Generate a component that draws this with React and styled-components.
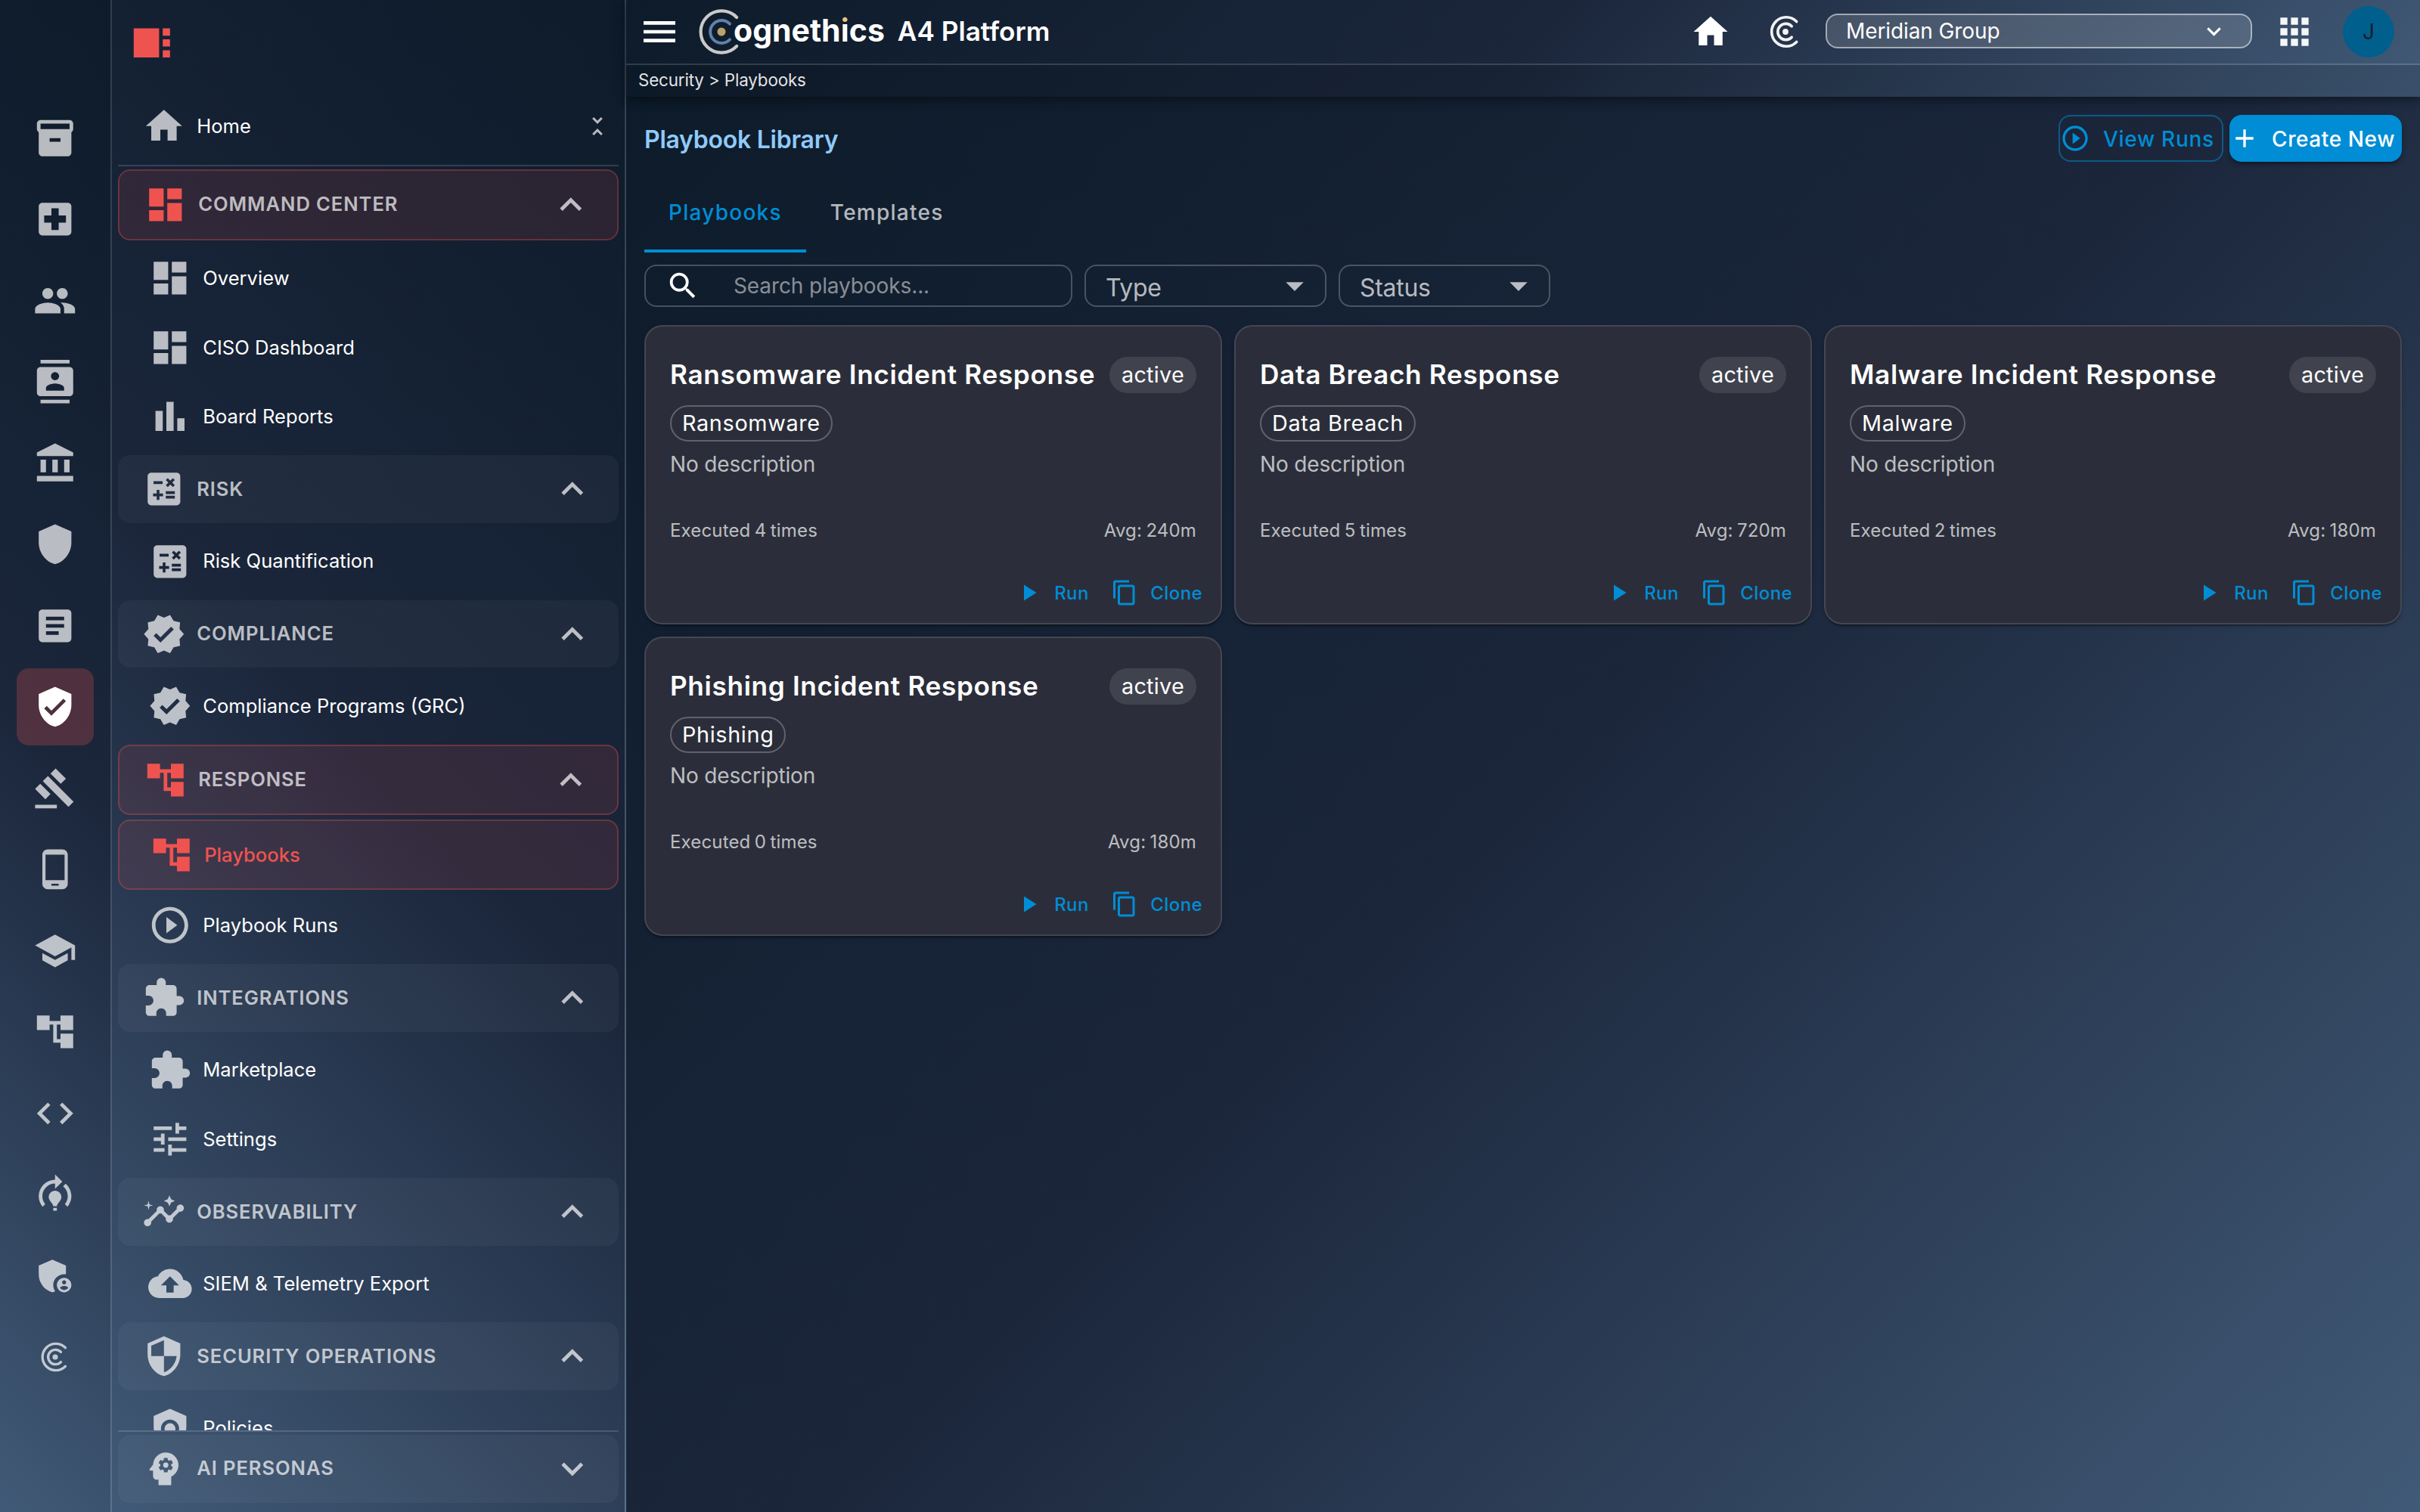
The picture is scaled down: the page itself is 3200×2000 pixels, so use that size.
import styled, { createGlobalStyle, css } from "styled-components";
import {
  MdAccountBalance,
  MdAccountTree,
  MdAdd,
  MdAdminPanelSettings,
  MdApps,
  MdArrowDropDown,
  MdArticle,
  MdCalculate,
  MdCloudUpload,
  MdCode,
  MdContacts,
  MdContentCopy,
  MdDashboard,
  MdExpandLess,
  MdExpandMore,
  MdExtension,
  MdGavel,
  MdHome,
  MdInsights,
  MdInventory2,
  MdLocalHospital,
  MdMenu,
  MdModelTraining,
  MdPeople,
  MdPhoneAndroid,
  MdPlayArrow,
  MdPlayCircleOutline,
  MdPolicy,
  MdPsychology,
  MdSchool,
  MdSearch,
  MdSecurity,
  MdShield,
  MdTune,
  MdUnfoldLess,
  MdVerified,
  MdVerifiedUser,
  MdViewSidebar,
} from "react-icons/md";

const BarsIcon = () => (
  <svg viewBox="0 0 24 24" width="1em" height="1em" fill="currentColor">
    <path d="M4 9h4v11H4zm12 4h4v7h-4zm-6-9h4v16h-4z" />
  </svg>
);

const RingsIcon = () => (
  <svg
    viewBox="0 0 48 48"
    width="1em"
    height="1em"
    fill="none"
    stroke="currentColor"
    strokeWidth="3.6"
    strokeLinecap="round"
  >
    <path d="M38.6 10.6A19.2 19.2 0 1 0 38.6 37.4" />
    <path d="M32.2 16.8A10.6 10.6 0 1 0 32.2 31.2" />
    <circle cx="24" cy="24" r="3.9" fill="currentColor" stroke="none" />
  </svg>
);

const LogoMark = () => (
  <svg viewBox="0 0 60 60" width="60" height="60" fill="none" strokeLinecap="round">
    <path d="M50.2 11A27.6 27.6 0 1 0 50.2 49" stroke="#c9c9cb" strokeWidth="4.2" />
    <path d="M41 19.6A15 15 0 1 0 41 40.4" stroke="#5f82ab" strokeWidth="4" />
    <circle cx="30" cy="30" r="5.5" fill="#b9a26c" />
  </svg>
);

const railItems = [
  { icon: MdInventory2 },
  { icon: MdLocalHospital },
  { icon: MdPeople },
  { icon: MdContacts },
  { icon: MdAccountBalance },
  { icon: MdShield },
  { icon: MdArticle },
  { icon: MdVerifiedUser, active: true },
  { icon: MdGavel },
  { icon: MdPhoneAndroid },
  { icon: MdSchool },
  { icon: MdAccountTree },
  { icon: MdCode },
  { icon: MdModelTraining },
  { icon: MdAdminPanelSettings },
  { icon: RingsIcon, small: true },
];

const groups = [
  {
    title: "COMMAND CENTER",
    icon: MdDashboard,
    active: true,
    items: [
      { label: "Overview", icon: MdDashboard },
      { label: "CISO Dashboard", icon: MdDashboard },
      { label: "Board Reports", icon: BarsIcon },
    ],
  },
  {
    title: "RISK",
    icon: MdCalculate,
    items: [{ label: "Risk Quantification", icon: MdCalculate }],
  },
  {
    title: "COMPLIANCE",
    icon: MdVerified,
    items: [{ label: "Compliance Programs (GRC)", icon: MdVerified }],
  },
  {
    title: "RESPONSE",
    icon: MdAccountTree,
    active: true,
    items: [
      { label: "Playbooks", icon: MdAccountTree, active: true },
      { label: "Playbook Runs", icon: MdPlayCircleOutline },
    ],
  },
  {
    title: "INTEGRATIONS",
    icon: MdExtension,
    items: [
      { label: "Marketplace", icon: MdExtension },
      { label: "Settings", icon: MdTune },
    ],
  },
  {
    title: "OBSERVABILITY",
    icon: MdInsights,
    items: [{ label: "SIEM & Telemetry Export", icon: MdCloudUpload }],
  },
  {
    title: "SECURITY OPERATIONS",
    icon: MdSecurity,
    items: [{ label: "Policies", icon: MdPolicy }],
  },
];

const playbooks = [
  { name: "Ransomware Incident Response", type: "Ransomware", runs: 4, avg: 240 },
  { name: "Data Breach Response", type: "Data Breach", runs: 5, avg: 720 },
  { name: "Malware Incident Response", type: "Malware", runs: 2, avg: 180 },
  { name: "Phishing Incident Response", type: "Phishing", runs: 0, avg: 180 },
];

const PlaybookCard = ({ name, type, runs, avg }) => (
  <Card>
    <CardHead>
      <CardTitle>{name}</CardTitle>
      <Chip>active</Chip>
    </CardHead>
    <Chip $outlined>{type}</Chip>
    <Description>No description</Description>
    <Stats>
      <span>Executed {runs} times</span>
      <span>Avg: {avg}m</span>
    </Stats>
    <Actions>
      <TextButton>
        <MdPlayArrow />
        Run
      </TextButton>
      <TextButton>
        <MdContentCopy />
        Clone
      </TextButton>
    </Actions>
  </Card>
);

const App = () => {
  return (
    <Layout>
      <GlobalStyle />
      <Rail>
        {railItems.map(({ icon: Icon, active, small }, i) => (
          <RailButton key={i} $active={active} $small={small}>
            <Icon />
          </RailButton>
        ))}
      </Rail>

      <Sidebar>
        <SidebarTop>
          <MdViewSidebar />
        </SidebarTop>
        <HomeRow>
          <MdHome />
          <span>Home</span>
          <Collapse>
            <MdUnfoldLess />
          </Collapse>
        </HomeRow>
        <MenuScroll>
          {groups.map((group) => (
            <Group key={group.title}>
              <GroupHeader $active={group.active}>
                <group.icon />
                <span>{group.title}</span>
                <Chevron>
                  <MdExpandLess />
                </Chevron>
              </GroupHeader>
              {group.items.map((item) => (
                <MenuItem key={item.label} $active={item.active}>
                  <item.icon />
                  <span>{item.label}</span>
                </MenuItem>
              ))}
            </Group>
          ))}
        </MenuScroll>
        <SidebarFooter>
          <GroupHeader>
            <MdPsychology />
            <span>AI PERSONAS</span>
            <Chevron>
              <MdExpandMore />
            </Chevron>
          </GroupHeader>
        </SidebarFooter>
      </Sidebar>

      <Page>
        <AppBar>
          <Toolbar>
            <MenuButton>
              <MdMenu />
            </MenuButton>
            <Brand>
              <LogoMark />
              <Wordmark>
                ogneth<GoldDot>i</GoldDot>cs
              </Wordmark>
              <Product>A4 Platform</Product>
            </Brand>
            <HomeButton>
              <MdHome />
            </HomeButton>
            <RingsButton>
              <RingsIcon />
            </RingsButton>
            <OrgSelect>
              Meridian Group
              <MdExpandMore />
            </OrgSelect>
            <AppsButton>
              <MdApps />
            </AppsButton>
            <Avatar>J</Avatar>
          </Toolbar>
          <Breadcrumbs>Security &gt; Playbooks</Breadcrumbs>
        </AppBar>

        <Content>
          <TitleRow>
            <PageTitle>Playbook Library</PageTitle>
            <OutlinedButton>
              <MdPlayCircleOutline />
              <span>View Runs</span>
            </OutlinedButton>
            <ContainedButton>
              <MdAdd />
              <span>Create New</span>
            </ContainedButton>
          </TitleRow>
          <Tabs>
            <Tab $active>Playbooks</Tab>
            <Tab>Templates</Tab>
          </Tabs>
          <Filters>
            <SearchField>
              <MdSearch />
              <span>Search playbooks...</span>
            </SearchField>
            <Select $width={320}>
              <span>Type</span>
              <MdArrowDropDown />
            </Select>
            <Select $width={280}>
              <span>Status</span>
              <MdArrowDropDown />
            </Select>
          </Filters>
          <CardGrid>
            {playbooks.map((playbook) => (
              <PlaybookCard key={playbook.name} {...playbook} />
            ))}
          </CardGrid>
        </Content>
      </Page>
    </Layout>
  );
};

export default App;

const GlobalStyle = createGlobalStyle`
  * {
    box-sizing: border-box;
  }
  body {
    margin: 0;
    background: #0d1b2a;
    color: #fff;
    font-family: Inter, "Liberation Sans", sans-serif;
    font-size: 28px;
  }
  svg {
    display: block;
    flex-shrink: 0;
  }
`;

const stops = "#0d1b2a 0%, #1b263b 50%, #415a77 100%";
const line = "rgba(255, 255, 255, 0.15)";
const muted = "rgba(255, 255, 255, 0.7)";
const primary = "#008dd5";
const red = "#ef5350";

const Layout = styled.div`
  display: flex;
  width: 3200px;
  height: 2000px;
  overflow: hidden;
`;

const Rail = styled.nav`
  width: 148px;
  padding-top: 132px;
  display: flex;
  flex-direction: column;
  align-items: center;
  gap: 5.9px;
  background: linear-gradient(225deg, ${stops});
  border-right: 2px solid ${line};
`;

const RailButton = styled.div`
  width: 101.6px;
  height: 101.6px;
  flex-shrink: 0;
  display: flex;
  align-items: center;
  justify-content: center;
  border-radius: 16px;
  font-size: ${({ $small }) => ($small ? "44px" : "57.6px")};
  color: ${({ $active }) => ($active ? "#fff" : muted)};
  background: ${({ $active }) => ($active ? "rgba(239, 83, 80, 0.25)" : "none")};
`;

const Sidebar = styled.aside`
  width: 680px;
  padding: 0 8px;
  display: flex;
  flex-direction: column;
  background: linear-gradient(225deg, ${stops});
  border-right: 2px solid ${line};
`;

const SidebarTop = styled.div`
  height: 121.8px;
  padding: 27.6px 15.6px;
  font-size: 57.6px;
  color: ${red};
`;

const row = css`
  display: flex;
  align-items: center;
  gap: 14.6px;
  font-size: 25.6px;
  border-radius: 16px;

  > svg {
    font-size: 57.6px;
    color: ${muted};
  }
`;

const HomeRow = styled.div`
  ${row}
  height: 89.6px;
  margin-bottom: 6.6px;
  padding: 0 10px 0 32px;
`;

const Collapse = styled.div`
  margin-left: auto;
  font-size: 36px;
  color: ${muted};
`;

const MenuScroll = styled.div`
  flex: 1;
  min-height: 0;
  overflow: hidden;
  padding-top: 4px;
  border-top: 2px solid ${line};
`;

const Group = styled.div`
  margin-bottom: 6.4px;
`;

const activeRow = css`
  border: 2px solid rgba(239, 83, 80, 0.3);
  background: rgba(239, 83, 80, 0.12);

  > svg {
    color: ${red};
  }
`;

const GroupHeader = styled.div`
  ${row}
  height: ${({ $active }) => ($active ? "93.6px" : "89.6px")};
  padding: 0 32px;
  margin-bottom: 5.6px;
  font-weight: 600;
  letter-spacing: 0.9px;
  color: ${muted};
  background: rgba(255, 255, 255, 0.04);
  ${({ $active }) => $active && activeRow}

  > span {
    margin-top: -2px;
  }
`;

const Chevron = styled.div`
  margin-left: auto;
  font-size: 57.6px;
  color: ${muted};
`;

const MenuItem = styled.div`
  ${row}
  height: ${({ $active }) => ($active ? "93.6px" : "89.6px")};
  padding: 0 40px;

  & + & {
    margin-top: 2px;
  }

  > span {
    margin-top: -1px;
  }

  ${({ $active }) =>
    $active &&
    css`
      ${activeRow}
      color: ${red};
      font-weight: 500;
    `}
`;

const SidebarFooter = styled.div`
  height: 108px;
  padding-top: 4px;
  border-top: 2px solid ${line};
`;

const Page = styled.div`
  flex: 1;
  display: flex;
  flex-direction: column;
`;

const AppBar = styled.header`
  position: relative;
  z-index: 2;
  height: 128px;
  background: linear-gradient(135deg, ${stops});
  box-shadow:
    0 4px 8px -2px rgba(0, 0, 0, 0.2),
    0 8px 10px rgba(0, 0, 0, 0.14),
    0 2px 20px rgba(0, 0, 0, 0.12);
`;

const Toolbar = styled.div`
  height: 86px;
  display: flex;
  align-items: center;
  border-bottom: 2px solid ${line};
`;

const MenuButton = styled.div`
  margin-left: 15.5px;
  font-size: 56px;
`;

const Brand = styled.div`
  margin-left: 24px;
  margin-right: auto;
  display: flex;
  align-items: center;
`;

const Wordmark = styled.span`
  margin-left: -13.5px;
  margin-top: -4px;
  font-size: 41px;
  font-weight: 700;
  line-height: 48px;
`;

const GoldDot = styled.span`
  color: transparent;
  background: linear-gradient(#e6c583 17px, #fff 17px);
  background-clip: text;
`;

const Product = styled.span`
  margin-left: 17px;
  margin-top: -3px;
  font-size: 35.2px;
  font-weight: 600;
`;

const HomeButton = styled.div`
  margin-top: -1px;
  font-size: 54px;
`;

const RingsButton = styled.div`
  margin-left: 48px;
  font-size: 48px;
  color: rgba(255, 255, 255, 0.94);
`;

const OrgSelect = styled.div`
  width: 564px;
  height: 46px;
  margin-left: 29px;
  margin-top: -2px;
  padding: 0 30px 0 25px;
  display: flex;
  align-items: center;
  justify-content: space-between;
  font-size: 28px;
  letter-spacing: -0.1px;
  line-height: 42px;
  border: 2px solid rgba(255, 255, 255, 0.5);
  border-radius: 16px;
  background: rgba(255, 255, 255, 0.15);

  svg {
    font-size: 37px;
  }
`;

const AppsButton = styled.div`
  margin-left: 28px;
  margin-top: -1px;
  font-size: 56px;
  color: rgba(255, 255, 255, 0.95);
`;

const Avatar = styled.div`
  width: 68px;
  height: 68px;
  margin: 0 34px 0 36px;
  display: flex;
  align-items: center;
  justify-content: center;
  border-radius: 50%;
  background: #005f8c;
  color: #16202f;
  font-size: 28px;
`;

const Breadcrumbs = styled.div`
  height: 42px;
  padding: 0 0 3px 16px;
  display: flex;
  align-items: center;
  font-size: 22.4px;
  letter-spacing: -0.15px;
  color: rgba(255, 255, 255, 0.9);
  background: rgba(0, 0, 0, 0.1);
`;

const Content = styled.main`
  flex: 1;
  padding: 24px 24px 0;
  background: linear-gradient(135deg, ${stops});
`;

const TitleRow = styled.div`
  display: flex;
  align-items: center;
  gap: 8px;
`;

const PageTitle = styled.h1`
  margin: 2px auto 0 0;
  font-size: 32px;
  font-weight: 600;
  letter-spacing: -0.25px;
  color: #90caf9;
`;

const OutlinedButton = styled.button`
  width: 218px;
  height: 62px;
  padding: 0;
  display: flex;
  align-items: center;
  gap: 17px;
  font-family: inherit;
  font-size: 28px;
  font-weight: 500;
  letter-spacing: 0.7px;
  white-space: nowrap;
  color: ${primary};
  background: none;
  border: 2px solid rgba(0, 141, 213, 0.5);
  border-radius: 16px;

  span {
    margin-top: 2px;
  }

  svg {
    font-size: 40px;
  }
`;

const ContainedButton = styled(OutlinedButton)`
  width: 228px;
  gap: 16px;
  letter-spacing: 0.6px;
  color: #fff;
  background: ${primary};
  border: 0;
  box-shadow:
    0 6px 2px -4px rgba(0, 0, 0, 0.2),
    0 4px 4px rgba(0, 0, 0, 0.14),
    0 2px 10px rgba(0, 0, 0, 0.12);
`;

const Tabs = styled.div`
  margin-top: 24px;
  height: 96px;
  display: flex;
`;

const Tab = styled.div`
  padding: 0 32px 11px;
  display: flex;
  align-items: center;
  font-size: 28px;
  font-weight: 500;
  letter-spacing: 1.25px;
  color: ${({ $active }) => ($active ? primary : muted)};
  box-shadow: ${({ $active }) => ($active ? `inset 0 -4px ${primary}` : "none")};
`;

const Filters = styled.div`
  margin-top: 16px;
  display: flex;
  gap: 16px;
`;

const field = css`
  height: 56px;
  display: flex;
  align-items: center;
  border: 2px solid rgba(255, 255, 255, 0.23);
  border-radius: 16px;
`;

const SearchField = styled.div`
  ${field}
  width: 566px;
  padding-left: 26px;
  gap: 44px;
  letter-spacing: -0.1px;
  color: rgba(255, 255, 255, 0.5);

  svg {
    font-size: 46px;
    color: #fff;
  }
`;

const Select = styled.div`
  ${field}
  width: ${({ $width }) => $width}px;
  padding: 0 12px 0 26px;
  justify-content: space-between;
  font-size: 32px;
  letter-spacing: -0.3px;
  color: ${muted};

  span {
    padding-top: 4px;
  }

  svg {
    font-size: 56px;
  }
`;

const CardGrid = styled.div`
  margin-top: 24px;
  display: grid;
  grid-template-columns: repeat(3, 1fr);
  gap: 16px;
`;

const Card = styled.article`
  height: 396px;
  padding: 40px 32px 0;
  border: 2px solid rgba(255, 255, 255, 0.12);
  border-radius: 24px;
  background: #2b2e3a;
  box-shadow:
    0 4px 2px -2px rgba(0, 0, 0, 0.2),
    0 2px 2px rgba(0, 0, 0, 0.14),
    0 2px 6px rgba(0, 0, 0, 0.12);
`;

const CardHead = styled.div`
  margin-bottom: 16px;
  display: flex;
  align-items: center;
  justify-content: space-between;
`;

const CardTitle = styled.h2`
  margin: -3px 0 0;
  font-size: 35.2px;
  font-weight: 600;
  letter-spacing: 0.66px;
  line-height: 48px;
`;

const Chip = styled.span`
  display: inline-flex;
  align-items: center;
  height: 48px;
  padding: 0 ${({ $outlined }) => ($outlined ? 14 : 16)}px 2px;
  font-size: 28.8px;
  letter-spacing: ${({ $outlined }) => ($outlined ? 0.65 : 0.27)}px;
  border-radius: 24px;
  border: ${({ $outlined }) => ($outlined ? "2px solid rgba(255, 255, 255, 0.25)" : "0")};
  background: ${({ $outlined }) => ($outlined ? "none" : "rgba(255, 255, 255, 0.1)")};
`;

const Description = styled.p`
  height: 80px;
  margin: 8px 0 0;
  line-height: 44px;
  letter-spacing: -0.15px;
  color: ${muted};
`;

const Stats = styled.div`
  margin-top: 10px;
  display: flex;
  justify-content: space-between;
  font-size: 24px;
  line-height: 40px;
  letter-spacing: 0.15px;
  word-spacing: -1.5px;
  color: ${muted};
`;

const Actions = styled.div`
  margin: 34px -16px 0;
  display: flex;
  justify-content: flex-end;
  gap: 13.5px;
`;

const TextButton = styled.div`
  height: 56px;
  padding: 0 8px;
  display: flex;
  align-items: center;
  gap: 16px;
  font-size: 24px;
  font-weight: 500;
  letter-spacing: 0.4px;
  color: ${primary};

  svg {
    font-size: 36px;
  }
`;
